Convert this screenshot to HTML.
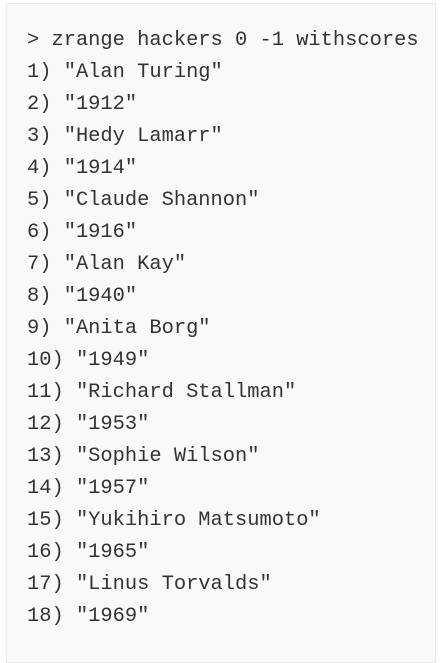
<!DOCTYPE html>
<html><head><style>
body{margin:0;background:#fff;width:442px;height:650px;overflow:hidden}
.box{position:absolute;left:6px;top:3px;width:430px;height:660px;background:#f9f9f9;border:1px solid #e8e8e8;box-sizing:border-box}
pre{margin:0;position:absolute;left:27px;top:25px;font-family:"Liberation Mono",monospace;font-size:20.4px;line-height:32px;color:#333}
</style></head><body>
<div class="box"></div>
<pre>&gt; zrange hackers 0 -1 withscores
1) "Alan Turing"
2) "1912"
3) "Hedy Lamarr"
4) "1914"
5) "Claude Shannon"
6) "1916"
7) "Alan Kay"
8) "1940"
9) "Anita Borg"
10) "1949"
11) "Richard Stallman"
12) "1953"
13) "Sophie Wilson"
14) "1957"
15) "Yukihiro Matsumoto"
16) "1965"
17) "Linus Torvalds"
18) "1969"</pre>
</body></html>
